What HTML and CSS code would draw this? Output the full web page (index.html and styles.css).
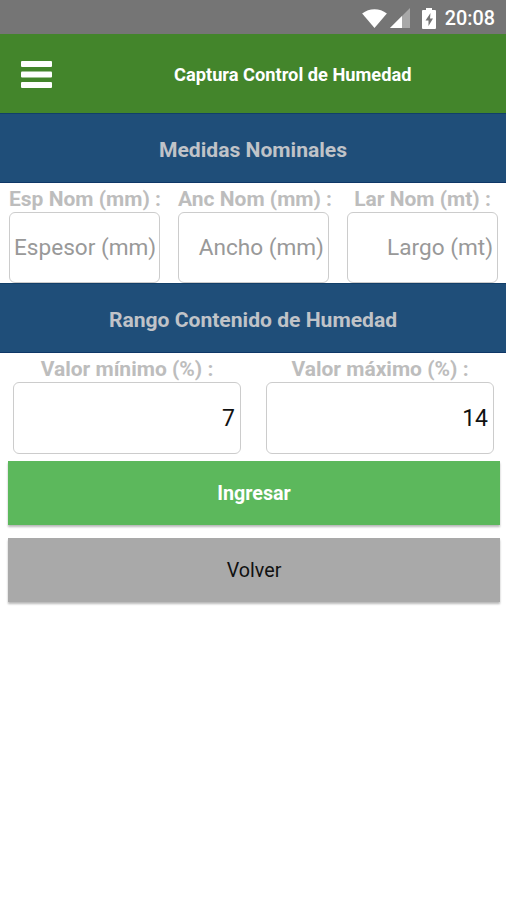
FILE: index.html
```html
<!DOCTYPE html>
<html lang="es">
<head>
  <meta charset="UTF-8">
  <meta name="viewport" content="width=device-width, initial-scale=1.0">
  <title>Captura Control de Humedad</title>
  <link rel="stylesheet" href="styles.css">
</head>
<body>
  <div class="status">
    <svg class="wifi" width="25" height="19" viewBox="0 0 26 20">
      <path d="M0 4.8C7.5-1.4 18.500-1.400 26 4.800L13 20z" fill="#fff"/>
    </svg>
    <svg class="signal" width="20" height="20" viewBox="0 0 20 20">
      <path d="M20 0v20H0z" fill="#a8a8a8"/>
      <path d="M12 8v12H0z" fill="#fff"/>
    </svg>
    <svg class="battery" width="14" height="21" viewBox="0 0 14 21">
      <path d="M4 0h6v2h3q1 0 1 1v17q0 1-1 1H1q-1 0-1-1V3q0-1 1-1h3z" fill="#fff"/>
      <path d="M8.500 5L3.500 12.500h3V18l4.500-7.500H8z" fill="#757575"/>
    </svg>
    <span class="time">20:08</span>
  </div>
  <header class="header">
    <button class="menu" aria-label="Menú">
      <svg width="31" height="27" viewBox="0 0 31 27" fill="#fff">
        <rect width="31" height="6" rx="1"/>
        <rect y="10.500" width="31" height="6" rx="1"/>
        <rect y="21" width="31" height="6" rx="1"/>
      </svg>
    </button>
    <h1>Captura Control de Humedad</h1>
  </header>
  <form>
    <h2>Medidas Nominales</h2>
    <div class="row nominal">
      <label>Esp Nom (mm) :
        <input type="text" placeholder="Espesor (mm)">
      </label>
      <label>Anc Nom (mm) :
        <input type="text" placeholder="Ancho (mm)">
      </label>
      <label>Lar Nom (mt) :
        <input type="text" placeholder="Largo (mt)">
      </label>
    </div>
    <h2>Rango Contenido de Humedad</h2>
    <div class="row rango">
      <label>Valor mínimo (%) :
        <input type="text" value="7">
      </label>
      <label>Valor máximo (%) :
        <input type="text" value="14">
      </label>
    </div>
    <div class="actions">
      <button type="button" class="btn ingresar">Ingresar</button>
      <button type="button" class="btn volver">Volver</button>
    </div>
  </form>
</body>
</html>
```

FILE: styles.css
```css
* {
  padding: 0;
  margin: 0;
  box-sizing: border-box;
}
body {
  min-height: 100vh;
  background-color: #fff;
  font-family: Roboto, sans-serif;
}
button,
input {
  border: 0;
  font-family: inherit;
}
.status {
  display: flex;
  align-items: center;
  justify-content: flex-end;
  height: 34px;
  padding: 2px 11px 0 0;
  background-color: #757575;
  color: #fff;
}
.signal {
  margin: 0 12px 0 3px;
}
.time {
  margin-left: 9px;
  font-size: 19.800px;
  font-weight: 500;
}
.header {
  display: flex;
  align-items: center;
  height: 79px;
  padding-left: 21px;
  background-color: #43852b;
  color: #fff;
}
.menu {
  padding-top: 1px;
  background: none;
}
.menu svg {
  display: block;
}
.header h1 {
  margin-left: 122px;
  padding-top: 1px;
  font-size: 18.250px;
  font-weight: 700;
}
h2 {
  height: 70px;
  border-top: 1px solid #123f69;
  border-bottom: 1px solid #0f3767;
  background-color: #1f4e79;
  color: #c0c3c8;
  font-size: 21.100px;
  font-weight: 700;
  line-height: 72px;
  text-align: center;
}
.row {
  display: grid;
}
.nominal {
  grid-template-columns: repeat(3, 151px);
  column-gap: 18px;
  height: 100px;
  padding-left: 9px;
}
.rango {
  grid-template-columns: repeat(2, 228px);
  column-gap: 25px;
  height: 101px;
  padding-left: 13px;
}
label {
  padding-top: 4px;
  color: #bdbdbd;
  font-size: 21px;
  font-weight: 700;
  line-height: 25px;
  text-align: center;
  white-space: nowrap;
}
input {
  display: block;
  width: 100%;
  height: 71px;
  padding: 0 4px;
  border: 1.500px solid #ccc;
  border-radius: 6px;
  background-color: #fff;
  color: #111;
  font-size: 22.600px;
  text-align: right;
}
input::placeholder {
  color: #999;
}
.rango input {
  height: 72px;
  padding-right: 5px;
  font-size: 23px;
}
.actions {
  display: grid;
  row-gap: 13px;
  padding: 7px 6px 8px 8px;
}
.btn {
  height: 64px;
  padding-top: 1px;
  box-shadow: 0 2px 2px rgba(0, 0, 0, .28);
  font-size: 19.700px;
}
.ingresar {
  background-color: #5cb85c;
  color: #fff;
  font-weight: 700;
}
.volver {
  background-color: #a9a9a9;
  color: #111;
}
```
